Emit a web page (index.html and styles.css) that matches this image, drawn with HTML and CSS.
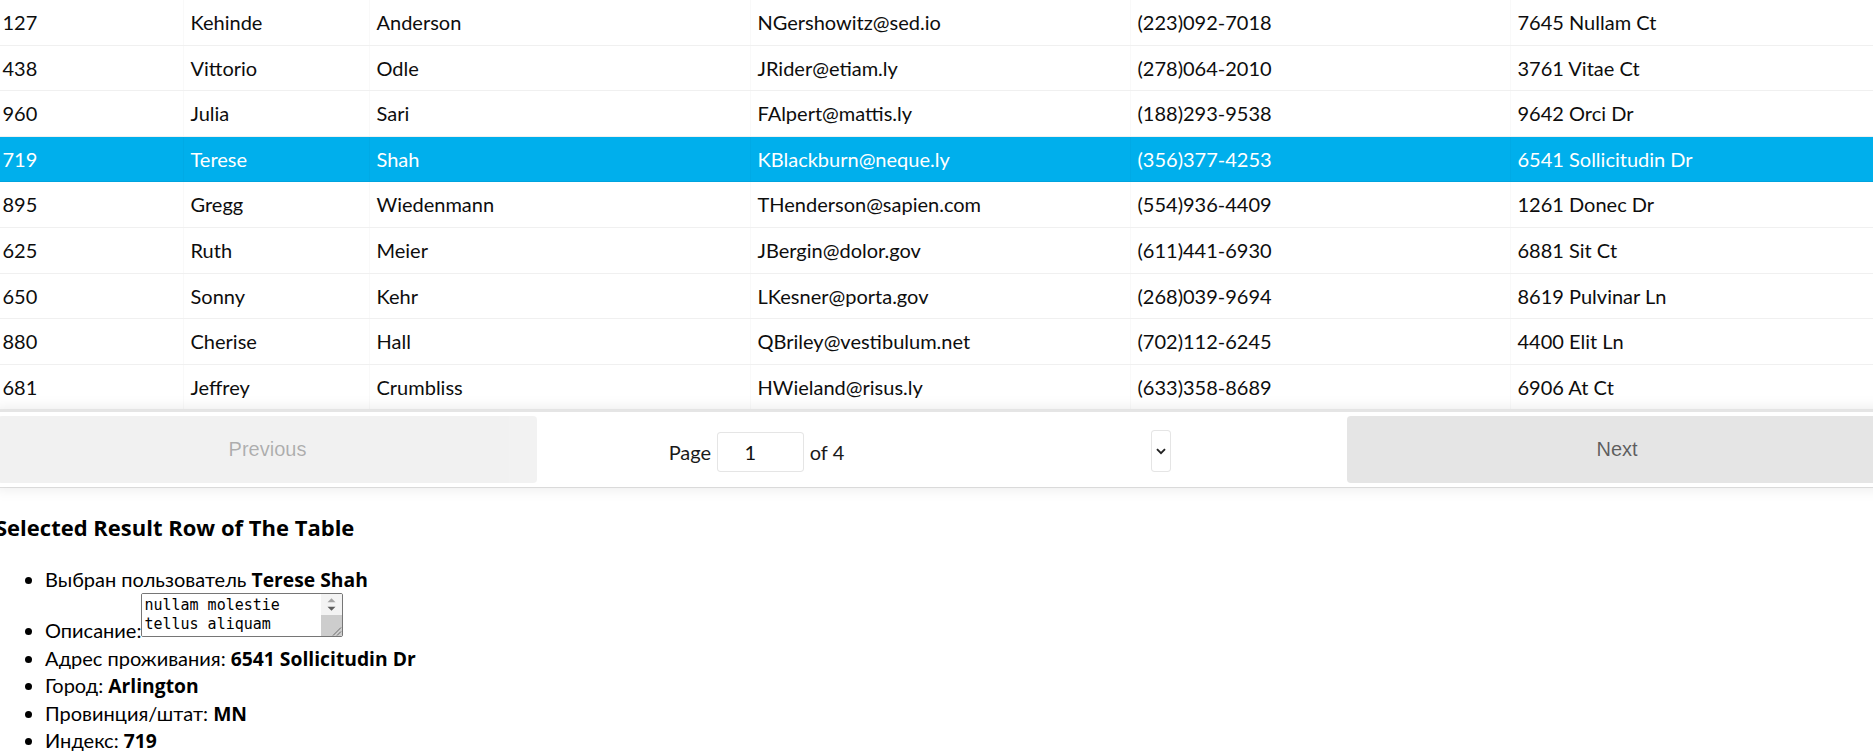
FILE: index.html
```html
<!DOCTYPE html>
<html lang="ru">
<head>
<meta charset="utf-8">
<title>Selected Result Row</title>
<link rel="stylesheet" href="styles.css">
</head>
<body>
<div class="page">
  <div class="rt">
    <div class="tbody">
      <div class="tr"><div class="td c1">127</div><div class="td c2">Kehinde</div><div class="td c3">Anderson</div><div class="td c4">NGershowitz@sed.io</div><div class="td c5">(223)092-7018</div><div class="td c6">7645 Nullam Ct</div></div>
      <div class="tr"><div class="td c1">438</div><div class="td c2">Vittorio</div><div class="td c3">Odle</div><div class="td c4">JRider@etiam.ly</div><div class="td c5">(278)064-2010</div><div class="td c6">3761 Vitae Ct</div></div>
      <div class="tr"><div class="td c1">960</div><div class="td c2">Julia</div><div class="td c3">Sari</div><div class="td c4">FAlpert@mattis.ly</div><div class="td c5">(188)293-9538</div><div class="td c6">9642 Orci Dr</div></div>
      <div class="tr sel"><div class="td c1">719</div><div class="td c2">Terese</div><div class="td c3">Shah</div><div class="td c4">KBlackburn@neque.ly</div><div class="td c5">(356)377-4253</div><div class="td c6">6541 Sollicitudin Dr</div></div>
      <div class="tr"><div class="td c1">895</div><div class="td c2">Gregg</div><div class="td c3">Wiedenmann</div><div class="td c4">THenderson@sapien.com</div><div class="td c5">(554)936-4409</div><div class="td c6">1261 Donec Dr</div></div>
      <div class="tr"><div class="td c1">625</div><div class="td c2">Ruth</div><div class="td c3">Meier</div><div class="td c4">JBergin@dolor.gov</div><div class="td c5">(611)441-6930</div><div class="td c6">6881 Sit Ct</div></div>
      <div class="tr"><div class="td c1">650</div><div class="td c2">Sonny</div><div class="td c3">Kehr</div><div class="td c4">LKesner@porta.gov</div><div class="td c5">(268)039-9694</div><div class="td c6">8619 Pulvinar Ln</div></div>
      <div class="tr"><div class="td c1">880</div><div class="td c2">Cherise</div><div class="td c3">Hall</div><div class="td c4">QBriley@vestibulum.net</div><div class="td c5">(702)112-6245</div><div class="td c6">4400 Elit Ln</div></div>
      <div class="tr"><div class="td c1">681</div><div class="td c2">Jeffrey</div><div class="td c3">Crumbliss</div><div class="td c4">HWieland@risus.ly</div><div class="td c5">(633)358-8689</div><div class="td c6">6906 At Ct</div></div>
    </div>
    <div class="pagination">
      <div class="prev"><button class="btn" type="button" disabled>Previous</button></div>
      <div class="center">
        <span class="page-info"><span>Page</span><input class="jump" type="text" value="1"><span>of 4</span></span>
        <span class="size-select"><svg width="10" height="7" viewBox="0 0 10 7"><polyline points="1,1.2 5,5.2 9,1.2" fill="none" stroke="#222" stroke-width="1.9"/></svg></span>
      </div>
      <div class="next"><button class="btn" type="button">Next</button></div>
    </div>
  </div>
  <h3 class="title">Selected Result Row of The Table</h3>
  <ul class="info">
    <li>Выбран пользователь <b>Terese Shah</b></li>
    <li>Описание:<span class="ta"><span class="ta-inner"><textarea class="ta-text" readonly>nullam molestie tellus aliquam</textarea><span class="sb"><svg class="sb-arrows" width="21" height="21" viewBox="0 0 21 21"><path d="M6.5 8.2 L10.5 4.2 L14.5 8.2 Z" fill="#a3a3a3"/><path d="M6.5 12.7 L10.5 16.7 L14.5 12.7 Z" fill="#5d5d5d"/></svg><svg class="sb-thumb" width="21" height="21" viewBox="0 0 21 21"><rect width="21" height="21" fill="#cdcdcd"/><path d="M12 20.5 L20 12.5 M16 20.5 L20 16.5" stroke="#6a6a6a" stroke-width="1"/></svg></span></span></span></li>
    <li>Адрес проживания: <b>6541 Sollicitudin Dr</b></li>
    <li>Город: <b>Arlington</b></li>
    <li>Провинция/штат: <b>MN</b></li>
    <li>Индекс: <b>719</b></li>
  </ul>
</div>
</body>
</html>
```

FILE: styles.css
```css
* {
  box-sizing: border-box;
}

html,
body {
  margin: 0;
  padding: 0;
  background: #fff;
}

body {
  font-family: Lato, "Noto Sans", sans-serif;
  font-size: 20px;
  color: #000;
}

.page {
  height: 751px;
  overflow: hidden;
}

/* ---------- table ---------- */
.rt {
  position: relative;
  width: 1897px;
  margin-left: -5px;
  border: 1px solid rgba(0, 0, 0, 0.1);
  border-top: 0;
}

.tr {
  display: flex;
  height: 45.6px;
  border-bottom: 1px solid rgba(0, 0, 0, 0.06);
  color: #0d0d0d;
}

.tr.sel {
  background: #00afec;
  color: #fff;
}

.td {
  padding: 9px 6px 0 6.5px;
  line-height: 27px;
  white-space: nowrap;
  overflow: hidden;
  border-right: 1px solid rgba(0, 0, 0, 0.025);
}

.c1 { width: 188px; }
.c2 { width: 186px; }
.c3 { width: 381px; }
.c4 { width: 380px; }
.c5 { width: 380px; }
.c6 { flex: 1; border-right: 0; }

/* ---------- pagination ---------- */
.pagination {
  position: relative;
  z-index: 1;
  display: flex;
  height: 76.4px;
  margin-left: -2.4px;
  padding: 4px;
  border-top: 2px solid rgba(0, 0, 0, 0.1);
  box-shadow: 0 0 15px 0 rgba(0, 0, 0, 0.1);
}

.prev,
.next {
  flex: 1;
}

.center {
  flex: 1.5;
  display: flex;
  align-items: center;
  padding-top: 5px;
}

.btn {
  display: block;
  width: 100%;
  height: 100%;
  border: 0;
  border-radius: 3.75px;
  padding: 6px;
  font-family: "Liberation Sans", Arial, sans-serif;
  font-size: 20px;
  color: rgba(0, 0, 0, 0.6);
  background: rgba(0, 0, 0, 0.1);
}

.btn[disabled] {
  opacity: 0.5;
}

.page-info {
  display: flex;
  align-items: center;
  gap: 5.6px;
  margin-left: 131.2px;
  line-height: 27px;
  color: #1a1a1a;
  white-space: nowrap;
}

.jump {
  width: 87.5px;
  height: 40px;
  margin: 0;
  border: 1px solid rgba(0, 0, 0, 0.1);
  border-radius: 3.75px;
  padding: 0 28.75px 0 8.75px;
  font-family: inherit;
  font-size: 20px;
  color: #111;
  text-align: center;
  background: #fff;
  outline: none;
}

.size-select {
  display: flex;
  align-items: center;
  justify-content: center;
  width: 20px;
  height: 42px;
  margin-left: auto;
  margin-right: 176px;
  margin-top: -2px;
  border: 1px solid rgba(0, 0, 0, 0.1);
  border-radius: 3.75px;
  background: #fff;
}

/* ---------- selected info ---------- */
.title {
  margin: 23.4px 0 22.4px -5px;
  padding-top: 1px;
  font-family: "Open Sans", "Noto Sans", sans-serif;
  font-size: 22px;
  line-height: 31px;
  font-weight: 700;
}

.info {
  margin: 20px 0 0 -5px;
  padding-left: 50px;
}

.info li {
  line-height: 27.5px;
}

.info b {
  font-family: "Open Sans", "Noto Sans", sans-serif;
  font-size: 19.3px;
  font-weight: 700;
}

.ta {
  display: inline-block;
  overflow: hidden;
  vertical-align: 1px;
  width: 202px;
  height: 44px;
  border: 1px solid #767676;
  border-radius: 2px;
  background: #fff;
}

.ta-inner {
  display: flex;
  height: 100%;
}

.ta-text {
  display: block;
  width: 179px;
  height: 42px;
  margin: 0;
  padding: 2px 0 0 2px;
  border: 0;
  resize: none;
  overflow: hidden;
  outline: none;
  font-family: "DejaVu Sans Mono", "Liberation Mono", monospace;
  font-size: 15px;
  line-height: 19px;
  color: #000;
  background: #fff;
}

.sb {
  display: flex;
  flex-direction: column;
  width: 21px;
  height: 42px;
  background: #f3f3f3;
}

.sb svg {
  display: block;
}
```
